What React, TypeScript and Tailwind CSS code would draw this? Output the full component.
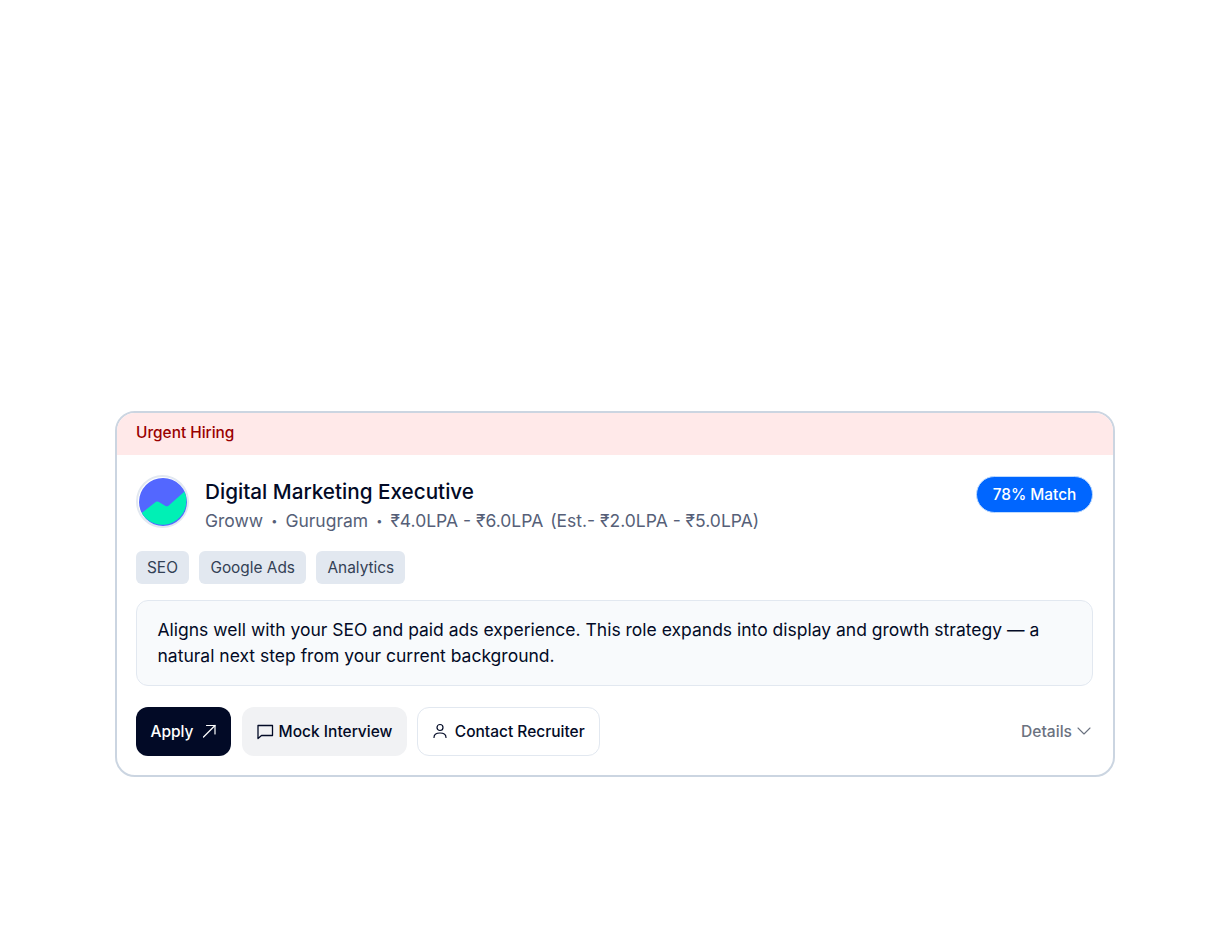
import React from "react";

function ArrowIcon() {
  return (
    <svg width="16" height="16" viewBox="0 0 16 16" fill="none" stroke="currentColor" strokeWidth="1.2" strokeLinecap="round" strokeLinejoin="round">
      <path d="M2.500 14 14 2.500" />
      <path d="M5.500 2.500H14V11" />
    </svg>
  );
}

function ChatIcon() {
  return (
    <svg width="18" height="18" viewBox="0 0 18 18" fill="none" stroke="currentColor" strokeWidth="1.3" strokeLinejoin="round">
      <path d="M2 3.500H16.500V13.500H5.500L2 16.500V3.500Z" />
    </svg>
  );
}

function PersonIcon() {
  return (
    <svg width="16" height="16" viewBox="0 0 16 16" fill="none" stroke="currentColor" strokeWidth="1.2" strokeLinecap="round">
      <circle cx="8" cy="4.500" r="3" />
      <path d="M2 14.500c0-3 2.600-4.500 6-4.500s6 1.500 6 4.500" />
    </svg>
  );
}

function ChevronIcon() {
  return (
    <svg width="14" height="8" viewBox="0 0 14 8" fill="none" stroke="currentColor" strokeWidth="1.1" strokeLinecap="round" strokeLinejoin="round">
      <path d="M1 1l6 6 6-6" />
    </svg>
  );
}

function Logo() {
  return (
    <div className="w-[53px] h-[53px] rounded-full border-2 border-[#e2e8f0] bg-white p-[0.5px] shrink-0">
      <svg viewBox="0 0 48 48" className="w-full h-full block">
        <circle cx="24" cy="24" r="24" fill="#5367ff" />
        <path d="M2.700 35 L17 23.800 Q18 23 19.500 23.800 L26.500 28 Q28 28.800 29.500 27.800 L45.500 13.500 A24 24 0 0 1 2.700 35Z" fill="#00f0b5" />
      </svg>
    </div>
  );
}

const tags = ["SEO", "Google Ads", "Analytics"];

export default function App() {
  return (
    <div className="min-h-[944px] bg-white pt-[411px] flex justify-center font-['Inter',sans-serif]">
      <div className="w-[1000px] h-[366px] ml-[1px] rounded-[20px] border-2 border-[#cbd5e1] overflow-hidden bg-white">
        <div className="h-[42px] bg-[#ffe9e9] px-[19.500px] pt-[10px] text-[15.400px] leading-5 font-medium text-[#990000]">Urgent Hiring</div>
        <div className="px-[19.500px] pt-5">
          <div className="flex items-start justify-between">
            <div className="flex gap-4">
              <Logo />
              <div>
                <div className="text-[20.700px] leading-7 font-medium text-[#020a26] mt-[3px]">Digital Marketing Executive</div>
                <div className="flex items-center text-[17.500px] leading-[26px] text-[#565f78] mt-[2px]">
                  <span>Groww</span>
                  <span className="mx-[8px] text-[11px]">•</span>
                  <span>Gurugram</span>
                  <span className="mx-[8px] text-[11px]">•</span>
                  <span>₹4.0LPA - ₹6.0LPA</span>
                  <span className="ml-[7px]">(Est.- ₹2.0LPA - ₹5.0LPA)</span>
                </div>
              </div>
            </div>
            <div className="h-[37px] w-[117px] mt-[1px] rounded-full bg-[#0066ff] border border-[#bfdbfe] text-white text-[15.400px] font-medium flex items-center justify-center">78% Match</div>
          </div>
          <div className="flex gap-[10.500px] mt-[17px]">
            {tags.map((t) => (
              <span key={t} className="h-[33px] px-[11px] rounded-md bg-[#e2e8f0] text-[#334155] text-[15.400px] flex items-center">{t}</span>
            ))}
          </div>
          <div className="mt-4 h-[86px] rounded-xl border border-[#e2e8f0] bg-[#f8fafc] pl-[20.500px] pr-5 pt-4 text-[17.500px] leading-[26px] text-[#020a26]">
            Aligns well with your SEO and paid ads experience. This role expands into display and growth strategy — a natural next step from your current background.
          </div>
          <div className="flex items-center mt-[21px]">
            <button className="h-[48.500px] w-[95px] rounded-xl bg-[#020a26] text-white text-[15.500px] font-medium flex items-center justify-center gap-[7px]">
              Apply <ArrowIcon />
            </button>
            <button className="h-[48.500px] w-[165px] ml-[10.500px] rounded-xl bg-[#f1f2f4] text-[#020a26] text-[15.500px] font-medium flex items-center justify-center gap-[5px]">
              <ChatIcon /> Mock Interview
            </button>
            <button className="h-[48.500px] w-[182.500px] ml-[10.500px] rounded-xl bg-white border border-[#e2e8f0] text-[#020a26] text-[15.500px] font-medium flex items-center justify-center gap-[7px]">
              <PersonIcon /> Contact Recruiter
            </button>
            <div className="ml-auto flex items-center gap-[5px] text-[#6b7280] text-[15.600px] font-medium mr-[2px]">
              Details <ChevronIcon />
            </div>
          </div>
        </div>
      </div>
    </div>
  );
}
